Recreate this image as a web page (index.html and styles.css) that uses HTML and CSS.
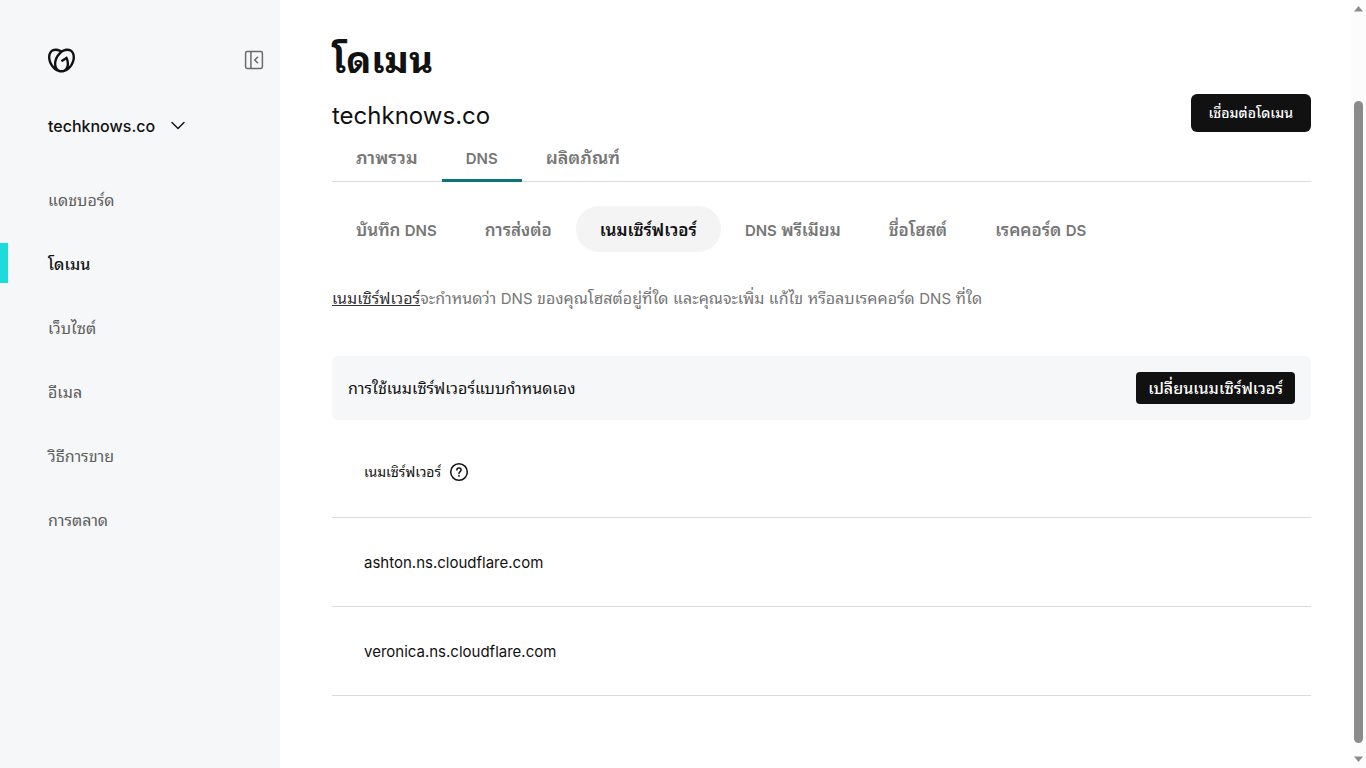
FILE: index.html
```html
<!DOCTYPE html>
<html lang="th">
<head>
<meta charset="utf-8">
<meta name="viewport" content="width=device-width, initial-scale=1">
<title>โดเมน</title>
<link rel="stylesheet" href="styles.css">
</head>
<body>
<div class="shell">
  <aside class="sidebar">
    <div class="brand">
      <a class="logo" href="#" aria-label="หน้าแรก">
        <svg width="27" height="27" viewBox="0 0 24 24" fill="#111"><path d="M20.702 2.29c-2.494-1.554-5.778-1.187-8.706.654C9.076 1.104 5.79.736 3.3 2.29c-3.941 2.463-4.42 8.806-1.07 14.167 2.47 3.954 6.333 6.269 9.77 6.226 3.439.043 7.301-2.273 9.771-6.226 3.347-5.361 2.872-11.704-1.069-14.167zM4.042 15.328a12.838 12.838 0 01-1.546-3.541 10.12 10.12 0 01-.336-3.338c.15-1.98.956-3.524 2.27-4.345 1.315-.822 3.052-.87 4.903-.137.281.113.556.24.825.382A15.11 15.11 0 007.5 7.54c-2.035 3.255-2.655 6.878-1.945 9.765a13.247 13.247 0 01-1.514-1.98zm17.465-3.541a12.866 12.866 0 01-1.547 3.54 13.25 13.25 0 01-1.513 1.984c.635-2.589.203-5.76-1.353-8.734a.39.39 0 00-.563-.153l-4.852 3.032a.397.397 0 00-.126.546l.712 1.139a.395.395 0 00.547.126l3.145-1.965c.101.306.203.606.28.916.296 1.086.41 2.214.335 3.337-.15 1.982-.956 3.525-2.27 4.347a4.437 4.437 0 01-2.25.65h-.101a4.432 4.432 0 01-2.25-.65c-1.314-.822-2.121-2.365-2.27-4.347-.074-1.123.039-2.251.335-3.337a13.212 13.212 0 014.05-6.482 10.148 10.148 0 012.849-1.765c1.845-.733 3.586-.685 4.9.137 1.316.822 2.122 2.365 2.271 4.345a10.146 10.146 0 01-.33 3.334z"/></svg>
      </a>
      <button class="icon-button" type="button" aria-label="ย่อเมนู">
        <svg width="20" height="20" viewBox="0 0 20 20" fill="none" stroke="#6b6b6b" stroke-width="1.5"><rect x="1.6" y="1.6" width="16.8" height="16.8" rx="1.6"/><path d="M6.9 1.6v16.8M14 6.8L10.8 10l3.2 3.2"/></svg>
      </button>
    </div>
    <button class="site-picker" type="button">techknows.co
      <svg width="16" height="10" viewBox="0 0 16 10" fill="none" stroke="#111" stroke-width="1.4" stroke-linecap="round" stroke-linejoin="round"><path d="M2 1.5l6 6 6-6"/></svg>
    </button>
    <nav class="menu">
      <a href="#">แดชบอร์ด</a>
      <a class="current" href="#">โดเมน</a>
      <a href="#">เว็บไซต์</a>
      <a href="#">อีเมล</a>
      <a href="#">วิธีการขาย</a>
      <a href="#">การตลาด</a>
    </nav>
  </aside>
  <main class="content">
    <h1>โดเมน</h1>
    <div class="domain-bar">
      <h2>techknows.co</h2>
      <button class="button" type="button">เชื่อมต่อโดเมน</button>
    </div>
    <nav class="tabs">
      <a href="#">ภาพรวม</a>
      <a class="current" href="#"><span class="latin">DNS</span></a>
      <a href="#">ผลิตภัณฑ์</a>
    </nav>
    <nav class="pills">
      <a href="#">บันทึก <span class="latin">DNS</span></a>
      <a href="#">การส่งต่อ</a>
      <a class="current" href="#">เนมเซิร์ฟเวอร์</a>
      <a href="#"><span class="latin">DNS</span> พรีเมียม</a>
      <a href="#">ชื่อโฮสต์</a>
      <a href="#">เรคคอร์ด <span class="latin">DS</span></a>
    </nav>
    <p class="intro"><a href="#">เนมเซิร์ฟเวอร์</a>จะกำหนดว่า <span class="latin">DNS</span> ของคุณโฮสต์อยู่ที่ใด และคุณจะเพิ่ม แก้ไข หรือลบเรคคอร์ด <span class="latin">DNS</span> ที่ใด</p>
    <section class="notice">
      <p>การใช้เนมเซิร์ฟเวอร์แบบกำหนดเอง</p>
      <button class="button button-compact" type="button">เปลี่ยนเนมเซิร์ฟเวอร์</button>
    </section>
    <table class="servers">
      <thead>
        <tr><th scope="col"><div class="heading">เนมเซิร์ฟเวอร์
          <button class="icon-button" type="button" aria-label="ความช่วยเหลือ">
            <svg width="20" height="20" viewBox="0 0 20 20" fill="none" stroke="#111" stroke-width="1.5" stroke-linecap="round"><circle cx="10" cy="10" r="8.3"/><path d="M7.9 8.1c0-1.2.9-2 2.1-2s2.1.8 2.1 1.9c0 1.6-2.1 1.7-2.1 3.4"/><circle cx="10" cy="13.9" r=".9" fill="#111" stroke="none"/></svg>
          </button></div></th></tr>
      </thead>
      <tbody>
        <tr><td>ashton.ns.cloudflare.com</td></tr>
        <tr><td>veronica.ns.cloudflare.com</td></tr>
      </tbody>
    </table>
  </main>
  <div class="scrollbar" aria-hidden="true">
    <svg width="9" height="6" viewBox="0 0 9 6" fill="#8b8b8b"><path d="M0 5.5L4.5 0 9 5.5z"/></svg>
    <div class="thumb"></div>
    <svg width="9" height="6" viewBox="0 0 9 6" fill="#8b8b8b"><path d="M0 .5L4.5 6 9 .5z"/></svg>
  </div>
</div>
</body>
</html>
```
FILE: styles.css
```css
* { box-sizing: border-box; }
body {
  margin: 0;
  font: 16px/24px Inter, "Noto Sans Thai Looped", Loma, Garuda, Umpush, Waree, "Noto Sans Thai", "Noto Sans", sans-serif;
  color: #111;
  background: #fff;
}
h1, h2, p { margin: 0; }
a { color: inherit; text-decoration: none; }
svg { display: block; }
button { font: inherit; color: inherit; border: 0; background: none; padding: 0; cursor: pointer; }
.latin { font-size: 15px; line-height: 1; }

.shell { display: grid; grid-template-columns: 280px 1fr 15px; min-height: 100vh; }

.sidebar { background: #f5f7f8; padding-top: 46px; }
.brand { display: flex; align-items: center; justify-content: space-between; padding: 0 16px 0 48px; height: 28px; }
.site-picker { display: flex; align-items: center; gap: 15px; margin: 40px 0 0 48px; font-weight: 500; }
.menu { display: grid; gap: 24px; margin-top: 41px; color: #5e5e5e; }
.menu a { padding: 9px 40px 7px; border-left: 8px solid transparent; }
.menu .current { border-color: #1bdbdb; color: #111; font-weight: 500; }

.content { padding: 36px 40px 40px 52px; }
h1 { font-size: 37px; line-height: 48px; font-weight: 700; }
.domain-bar { display: flex; justify-content: space-between; align-items: flex-end; margin-top: 10px; }
h2 { font-size: 24px; line-height: 32px; font-weight: 400; }
.button { background: #111; color: #fff; font-size: 14px; font-weight: 500; height: 38px; padding: 0 18px; border-radius: 6px; }
.button-compact { font-size: 16px; height: 32px; padding: 0 12px; border-radius: 4px; }

.tabs { display: flex; border-bottom: 1px solid #d6dbde; color: #767676; font-weight: 600; font-size: 18px; }
.tabs a { padding: 14px 24px 9px; margin-bottom: -1px; border-bottom: 3px solid transparent; }
.tabs .current { border-color: #09757a; }
.pills { display: flex; margin-top: 24px; color: #767676; font-weight: 600; font-size: 17px; }
.pills a { padding: 12px 24px 10px; border-radius: 23px; }
.pills .current { background: #f4f4f4; color: #111; }

.intro { margin-top: 34px; font-size: 16px; color: #767676; }
.intro a { color: #333; text-decoration: underline; }
.notice { display: flex; justify-content: space-between; align-items: center; margin-top: 46px; padding: 16px; background: #f5f7f8; border-radius: 6px; }

.servers { width: 100%; border-collapse: collapse; text-align: left; }
.servers th, .servers td { height: 89px; padding: 3px 32px 0; border-bottom: 1px solid #d6dbde; font-size: 15px; }
.servers th { height: 97px; padding: 16px 32px 8px; font-size: 14px; font-weight: 400; }
.heading { display: flex; align-items: center; gap: 8px; }

.scrollbar { display: flex; flex-direction: column; align-items: center; background: #fcfcfc; padding: 6px 0; }
.thumb { width: 9px; flex: 1; margin: 89px 0 13px; border-radius: 5px; background: #8b8b8b; }
```
